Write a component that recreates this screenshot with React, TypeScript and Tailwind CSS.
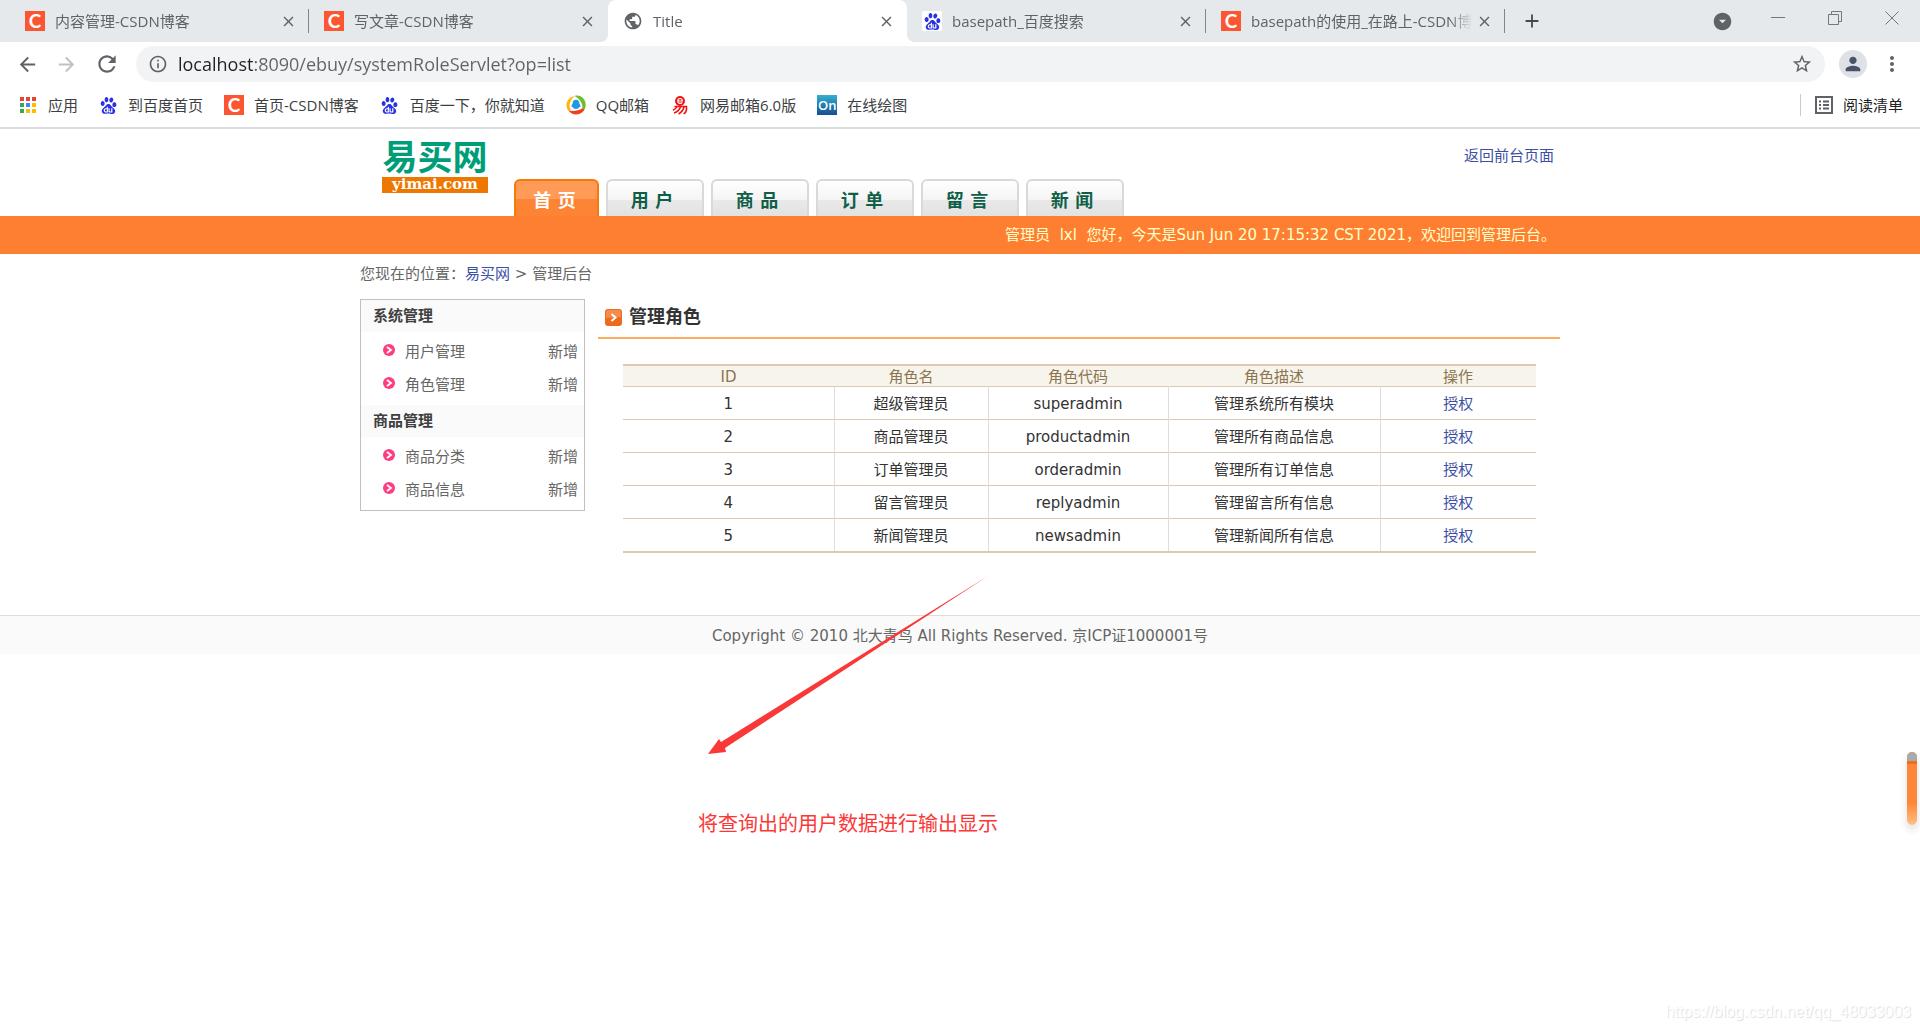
import React from "react";
import { SiBaidu } from "react-icons/si";
import { MdPublic, MdClose, MdAdd, MdArrowBack, MdArrowForward, MdRefresh, MdInfoOutline, MdStarBorder, MdPerson, MdMoreVert, MdArrowDropDownCircle } from "react-icons/md";

const CsdnIcon = () => (
  <span className="flex h-5 w-5 shrink-0 items-center justify-center bg-[#fc5531] font-['Lato',sans-serif] text-[19px] font-bold leading-5 text-white">C</span>
);

const BaiduIcon = () => (
  <span className="flex h-5 w-5 shrink-0 items-center justify-center rounded-xs bg-white">
    <SiBaidu size={17} className="text-[#2932e1]" />
  </span>
);

const QQIcon = () => (
  <svg width="20" height="20" viewBox="0 0 20 20" className="shrink-0">
    <path d="M9 1C3 2 .5 6.500.5 10c0 2.500.8 4.500 2.200 6 1-.2 1.500-.6 2-1C2.500 11 3.500 5 9 1z" fill="#ffb400" />
    <path d="M8.500 1c6-2 11.300 3 11.200 9-.1 2.200-.7 4-1.700 5.500-.8-.3-1.300-.8-1.700-1.500C17.300 9 14 4 8.500 1z" fill="#6fbf2c" />
    <path d="M2.600 15.500c3 .8 9 .8 14.400-2.500.5.800.9 1.600 1 2.500-4 5.300-12 5.600-15.400 0z" fill="#f0401e" />
    <path d="M10 4.800c2.300 0 3.400 1.700 3.400 3.800 1 1.400 1.300 2.800.8 3.600-.4.300-.7 0-1-.4-.3 1.300-1.500 2.300-3.200 2.300s-2.900-1-3.200-2.300c-.3.400-.6.700-1 .4-.5-.8-.2-2.200.8-3.600 0-2.100 1.100-3.800 3.400-3.800z" fill="#1d9be0" />
  </svg>
);

const NeteaseIcon = () => (
  <svg width="20" height="20" viewBox="0 0 20 20" className="shrink-0">
    <circle cx="10" cy="6" r="5" fill="#f01414" />
    <path d="M7.800 6h4.600c0-3.400-4.600-3.200-4.600 0 0 2.800 3.200 3 4.400 1.400" fill="none" stroke="#fff" strokeWidth="1.200" />
    <path d="M4.500 11.500h12c.3 4-.5 6.500-3 7.300M7 11.500C6 13.500 4.500 14.500 3 15.200M10.500 12c-1 3-3.500 5-6.500 6M14 12c-.8 3.500-3 5.500-5.500 7" fill="none" stroke="#f01414" strokeWidth="1.600" />
  </svg>
);

const OnIcon = () => (
  <span className="flex h-5 w-5 shrink-0 items-center justify-center bg-linear-to-b from-[#36b0cf] to-[#174f92] font-['Open_Sans',sans-serif] text-[13px] leading-5 font-semibold text-white">On</span>
);

const AppsIcon = () => (
  <svg width="16" height="16" viewBox="0 0 16 16" className="shrink-0">
    {["#ea4335", "#ea4335", "#ea4335", "#34a853", "#4285f4", "#fbbc04", "#34a853", "#fbbc04", "#fbbc04"].map((fill, i) => (
      <rect key={i} x={(i % 3) * 6} y={Math.floor(i / 3) * 6} width="4" height="4" fill={fill} />
    ))}
  </svg>
);

const tabs = [
  { title: "内容管理-CSDN博客", icon: <CsdnIcon />, divider: true },
  { title: "写文章-CSDN博客", icon: <CsdnIcon /> },
  { title: "Title", icon: <MdPublic size={20} className="shrink-0 text-[#5f6368]" />, active: true },
  { title: "basepath_百度搜索", icon: <BaiduIcon />, divider: true },
  { title: "basepath的使用_在路上-CSDN博客", icon: <CsdnIcon />, divider: true },
];

const bookmarks = [
  { title: "到百度首页", icon: <BaiduIcon /> },
  { title: "首页-CSDN博客", icon: <CsdnIcon /> },
  { title: "百度一下，你就知道", icon: <BaiduIcon /> },
  { title: "QQ邮箱", icon: <QQIcon /> },
  { title: "网易邮箱6.0版", icon: <NeteaseIcon /> },
  { title: "在线绘图", icon: <OnIcon /> },
];

const navItems = ["用 户", "商 品", "订 单", "留 言", "新 闻"];

const menus = [
  { title: "系统管理", items: ["用户管理", "角色管理"] },
  { title: "商品管理", items: ["商品分类", "商品信息"] },
];

const roles = [
  { id: 1, name: "超级管理员", code: "superadmin", desc: "管理系统所有模块" },
  { id: 2, name: "商品管理员", code: "productadmin", desc: "管理所有商品信息" },
  { id: 3, name: "订单管理员", code: "orderadmin", desc: "管理所有订单信息" },
  { id: 4, name: "留言管理员", code: "replyadmin", desc: "管理留言所有信息" },
  { id: 5, name: "新闻管理员", code: "newsadmin", desc: "管理新闻所有信息" },
];

const BrowserTabs = () => (
  <div className="flex h-[42px] bg-[#e5e9ec] pl-[10px]">
    {tabs.map((tab) => (
      <div key={tab.title} className={`relative flex w-[299px] min-w-0 items-center pl-[15px] text-[15px] text-[#5f6368] ${tab.active ? "rounded-t-lg bg-white" : ""}`}>
        {tab.active && (
          <>
            <span className="absolute bottom-0 -left-2 h-2 w-2 bg-[radial-gradient(circle_at_0_0,#e5e9ec_8px,white_8px)]" />
            <span className="absolute -right-2 bottom-0 h-2 w-2 bg-[radial-gradient(circle_at_100%_0,#e5e9ec_8px,white_8px)]" />
          </>
        )}
        {tab.icon}
        <button className="ml-[10px] min-w-0 flex-1 overflow-hidden text-left whitespace-nowrap mask-r-from-90%">{tab.title}</button>
        <button aria-label="关闭标签页" className="mr-3 ml-1"><MdClose size={17} /></button>
        {tab.divider && <span className="absolute right-0 h-6 w-px bg-[#80868b]" />}
      </div>
    ))}
    <button aria-label="新标签页" className="ml-4 text-[#45494d]"><MdAdd size={22} /></button>
    <div className="ml-auto flex text-[#5f6368]">
      <button aria-label="搜索标签页" className="mr-4"><MdArrowDropDownCircle size={21} /></button>
      <button aria-label="最小化" className="flex h-9 w-[57px] items-center justify-center">
        <svg width="14" height="14" viewBox="0 0 14 14"><path d="M0 6.500h14" stroke="#777" /></svg>
      </button>
      <button aria-label="还原" className="flex h-9 w-[57px] items-center justify-center">
        <svg width="14" height="14" viewBox="0 0 14 14" fill="none" stroke="#777"><path d="M.5 3.500h10v10H.5zM3.500 3.500v-3h10v10h-3" /></svg>
      </button>
      <button aria-label="关闭" className="flex h-9 w-[57px] items-center justify-center">
        <svg width="14" height="14" viewBox="0 0 14 14" stroke="#777"><path d="M.5.500l13 13M13.500.500l-13 13" /></svg>
      </button>
    </div>
  </div>
);

const Toolbar = () => (
  <div className="flex h-11 items-center pr-4 pl-4 text-[#5f6368]">
    <button aria-label="后退"><MdArrowBack size={23} /></button>
    <button aria-label="前进" className="ml-4 text-[#bdc1c6]"><MdArrowForward size={23} /></button>
    <button aria-label="重新加载" className="ml-4"><MdRefresh size={26} /></button>
    <div className="ml-4 flex h-9 flex-1 items-center rounded-full bg-[#f1f3f4] pr-3 pl-3">
      <MdInfoOutline size={20} className="shrink-0" />
      <input
        aria-label="地址栏"
        defaultValue="localhost:8090/ebuy/systemRoleServlet?op=list"
        className="ml-[10px] min-w-0 flex-1 bg-[linear-gradient(to_right,#202124_77px,#5f6368_77px)] bg-clip-text text-[18px] text-transparent outline-none"
      />
      <button aria-label="添加书签"><MdStarBorder size={22} /></button>
    </div>
    <button aria-label="用户" className="ml-[14px] flex h-7 w-7 items-center justify-center rounded-full bg-[#dee1e6] text-[#47546a]"><MdPerson size={22} /></button>
    <button aria-label="菜单" className="ml-[13px]"><MdMoreVert size={24} /></button>
  </div>
);

const BookmarkBar = () => (
  <div className="flex h-[43px] items-center border-b-2 border-[#dadce0] pr-[17px] pb-[3px] pl-5 text-[15px] text-[#3c4043]">
    <a href="#apps" className="flex items-center gap-3"><AppsIcon />应用</a>
    <nav className="ml-5 flex gap-[21px]">
      {bookmarks.map((b) => (
        <a key={b.title} href="#bookmark" className="flex items-center gap-[10px] whitespace-nowrap">{b.icon}{b.title}</a>
      ))}
    </nav>
    <button className="ml-auto flex items-center border-l border-[#c8cacd] pl-[14px] text-[#202124]">
      <svg width="18" height="18" viewBox="0 0 18 18" fill="none" stroke="#5f6368" strokeWidth="2" className="mr-[10px]">
        <path d="M1 1h16v16H1zM4 5.500h2M4 9h2M4 12.500h2M8 5.500h6M8 9h6M8 12.500h6" />
      </svg>
      阅读清单
    </button>
  </div>
);

const Header = () => (
  <header>
    <div className="mx-auto flex h-[87px] max-w-[1200px] items-end">
      <a href="#home" className="mr-[26px] mb-[23px] ml-[22px] w-[106px] text-center">
        <span className="block font-['Noto_Sans_CJK_SC',sans-serif] text-[35px] leading-[44px] font-bold whitespace-nowrap text-[#009e78]">易买网</span>
        <span className="block h-4 bg-[#ee7700] font-['DejaVu_Serif',serif] text-[15px] leading-[14px] font-bold text-white">yimai.com</span>
      </a>
      <nav className="flex gap-[7px] text-lg font-bold">
        <a href="#index" className="flex h-[37px] w-[85px] items-center justify-center rounded-t-md border-2 border-b-0 border-[#f57a0c] bg-[linear-gradient(to_bottom,#ff9a57_50%,#fd8335_50%)] pt-1 pr-1 text-white">首 页</a>
        {navItems.map((item) => (
          <a key={item} href="#nav" className="flex h-[37px] w-[98px] items-center justify-center rounded-t-md border-2 border-b-0 border-[#d9d9d9] bg-[linear-gradient(to_bottom,#fff,#f4f4f4_55%,#e9e9e9_55%,#e2e2e2)] pt-1 pr-[6px] text-[#0f5f48]">{item}</a>
        ))}
      </nav>
      <a href="#front" className="mr-[6px] mb-[50px] ml-auto text-[#3c4fa5]">返回前台页面</a>
    </div>
    <div className="bg-[#ff7f32]">
      <p className="mx-auto h-[38px] max-w-[1200px] pr-1 text-right leading-[39px] text-[#ffffcc]">管理员&nbsp; lxl&nbsp; 您好，今天是Sun Jun 20 17:15:32 CST 2021，欢迎回到管理后台。</p>
    </div>
  </header>
);

const Sidebar = () => (
  <aside className="w-[225px] shrink-0 self-start border border-[#c0c0c0]">
    {menus.map((menu) => (
      <section key={menu.title} className="mb-[3px]">
        <h3 className="mb-1 bg-[#fafafa] pl-3 leading-8 font-bold text-[#404040]">{menu.title}</h3>
        <ul>
          {menu.items.map((item) => (
            <li key={item} className="flex items-center pr-[6px] pl-[22px] leading-[33px]">
              <svg width="12" height="12" viewBox="0 0 12 12" className="mr-[10px] mb-[6px]">
                <circle cx="6" cy="6" r="6" fill="#ff3c82" />
                <path d="M4 3l4 3-4 3" fill="none" stroke="#fff" strokeWidth="1.800" />
              </svg>
              <a href="#menu">{item}</a>
              <a href="#add" className="ml-auto">新增</a>
            </li>
          ))}
        </ul>
      </section>
    ))}
  </aside>
);

const RoleTable = () => (
  <table className="w-full table-fixed border-collapse border-y-2 border-[#dfc9b3] text-center">
    <colgroup>
      <col className="w-[211px]" />
      <col className="w-[154px]" />
      <col className="w-[180px]" />
      <col className="w-[212px]" />
      <col className="w-[156px]" />
    </colgroup>
    <thead>
      <tr className="border-b border-[#dfc9b3] bg-[#f7f4eb] leading-[18px] text-[#8c7450]">
        {["ID", "角色名", "角色代码", "角色描述", "操作"].map((h) => <th key={h} className="p-0 pt-[2px] font-normal">{h}</th>)}
      </tr>
    </thead>
    <tbody>
      {roles.map((role) => (
        <tr key={role.id} className="border-b border-[#dfc9b3] leading-[30px] text-[#333] last:border-b-2">
          <td className="border-r border-[#ddd] p-0 pt-[2px]">{role.id}</td>
          <td className="border-r border-[#ddd] p-0 pt-[2px]">{role.name}</td>
          <td className="border-r border-[#ddd] p-0 pt-[2px]">{role.code}</td>
          <td className="border-r border-[#ddd] p-0 pt-[2px]">{role.desc}</td>
          <td className="p-0 pt-[2px]"><a href="#grant" className="text-[#3c4fa5]">授权</a></td>
        </tr>
      ))}
    </tbody>
  </table>
);

const App = () => {
  return (
    <div className="relative min-h-screen overflow-hidden bg-white">
      <div className="font-['Open_Sans','Noto_Sans_CJK_SC',sans-serif]">
        <BrowserTabs />
        <Toolbar />
        <BookmarkBar />
      </div>
      <div className="font-['DejaVu_Sans','Noto_Sans_CJK_SC',sans-serif] text-[15px] leading-5 text-[#666]">
        <Header />
        <main className="mx-auto max-w-[1200px]">
          <p className="pt-[10px] pb-[15px]">您现在的位置：<a href="#home" className="text-[#3c4fa5]">易买网</a> &gt; 管理后台</p>
          <div className="flex gap-[13px]">
            <Sidebar />
            <div className="min-w-0 flex-1">
              <h2 className="flex h-10 items-center border-b-2 border-[#ffaa5f] pb-[2px] pl-[7px] text-[18px] font-bold text-[#333]">
                <svg width="17" height="17" viewBox="0 0 17 17" className="mr-[7px]">
                  <rect width="17" height="17" rx="3" fill="#ee6a1c" />
                  <path d="M1 9V3a2 2 0 0 1 2-2h11a2 2 0 0 1 2 2v5z" fill="#f58c4c" />
                  <path d="M6.500 5l4 3.500-4 3.500" fill="none" stroke="#fff" strokeWidth="2" />
                </svg>
                管理角色
              </h2>
              <div className="pt-[25px] pr-[26px] pb-[62px] pl-[25px]"><RoleTable /></div>
            </div>
          </div>
        </main>
        <footer className="border-t border-[#ddd] bg-[#fafafa] pt-[2px] text-center leading-9">Copyright © 2010 北大青鸟 All Rights Reserved. 京ICP证1000001号</footer>
      </div>

      {/* annotation over the page */}
      <svg width="282" height="180" viewBox="0 0 282 180" className="absolute top-[575px] left-[707px]">
        <path d="M1 179L12 164L14 167L281 1L18 173L19 177Z" fill="#fb3838" />
      </svg>
      <p className="absolute top-[808px] left-[698px] font-['Noto_Sans_CJK_SC',sans-serif] text-[20px] leading-[30px] text-[#fb3838]">将查询出的用户数据进行输出显示</p>
      <div className="absolute top-[752px] right-[3px] h-[73px] w-[10px] overflow-hidden rounded-full bg-linear-to-b from-[#ff8636] from-70% to-[#ffc080] shadow-[0_5px_8px_#0002]">
        <div className="h-3 border-b-3 border-[#e8701c] bg-[#aaa]" />
      </div>
      <p className="absolute right-[9px] bottom-[6px] font-['Liberation_Sans',sans-serif] text-[16px] leading-6 text-white [text-shadow:1px_1px_1px_#ddd]">https://blog.csdn.net/qq_48033003</p>
    </div>
  );
};

export default App;
